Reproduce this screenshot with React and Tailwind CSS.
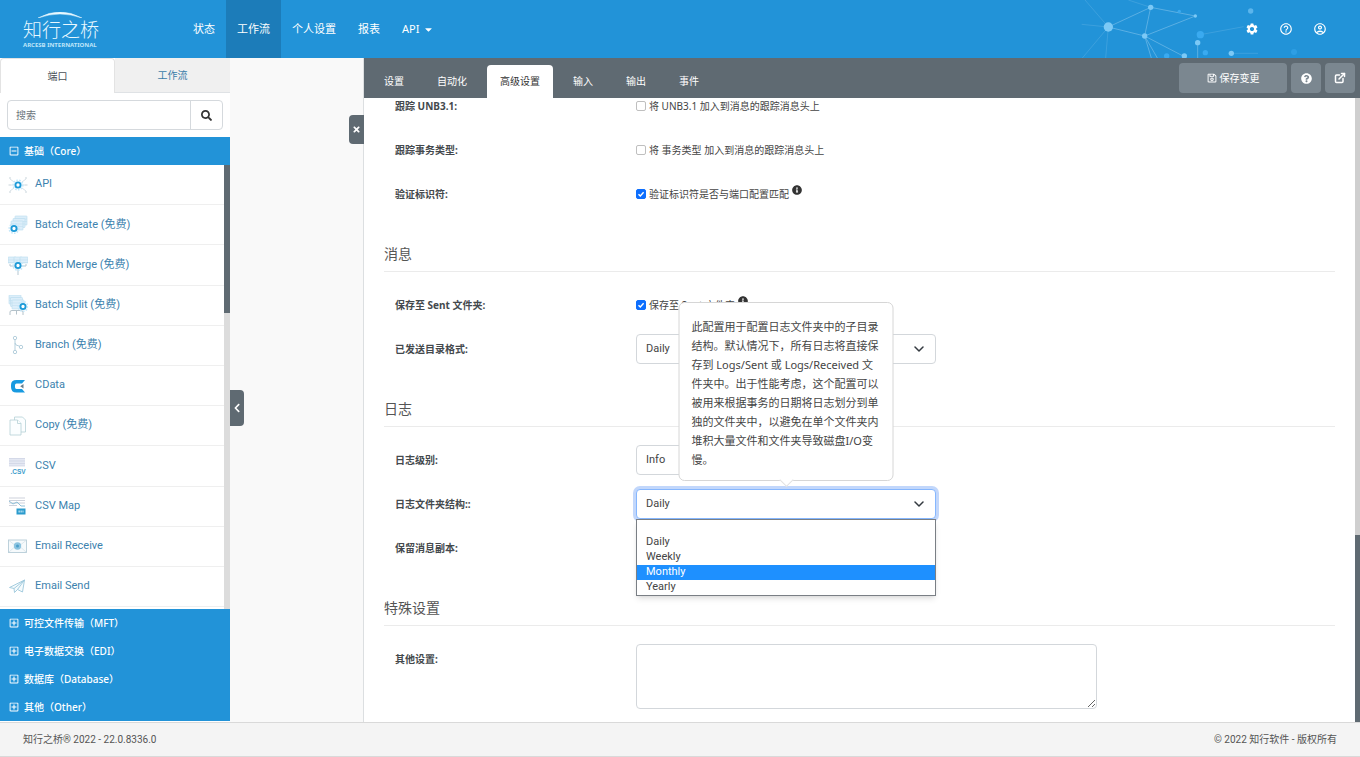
import React, { useState } from "react";
import {
  FaCaretDown,
  FaChevronLeft,
  FaInfoCircle,
  FaQuestionCircle,
  FaRegMinusSquare,
  FaRegPlusSquare,
  FaRegSave,
  FaSearch,
  FaTimes,
} from "react-icons/fa";
import { FiExternalLink } from "react-icons/fi";
import { MdHelpOutline, MdOutlineAccountCircle, MdSettings } from "react-icons/md";

const navItems = [
  { name: "状态" },
  { name: "工作流", active: true },
  { name: "个人设置" },
  { name: "报表" },
  { name: "API", dropdown: true },
];

const tabs = ["设置", "自动化", "高级设置", "输入", "输出", "事件"];

const groups = ["可控文件传输（MFT）", "电子数据交换（EDI）", "数据库（Database）", "其他（Other）"];

const Gear = ({ x, y }) => (
  <g>
    <circle cx={x} cy={y} r="4.8" fill="none" stroke="#c6e8fa" strokeWidth="1.6" strokeDasharray="1.6 1.3" />
    <circle cx={x} cy={y} r="2.6" fill="#fff" stroke="#1c9ad8" strokeWidth="1.9" />
  </g>
);

const Sheet = ({ x, y, w = 12, h = 9 }) => (
  <g>
    <rect x={x} y={y} width={w} height={h} rx="0.6" fill="#dceefa" stroke="#b9dbef" strokeWidth="0.6" />
    <path d={`M${x} ${y + 3}h${w}M${x} ${y + 5.5}h${w}`} stroke="#c3dff0" strokeWidth="0.6" />
  </g>
);

const connectors = [
  {
    name: "API",
    icon: (
      <>
        <path d="M2 4l4 3M2 10h4M2 16l4-3M18 4l-4 3M18 10h-4M18 16l-4-3" stroke="#cfdbe2" strokeWidth="0.8" />
        <path d="M1 3h2M0.5 10h2M1 17h2M17 3h2M17.500 10h2M17 17h2" stroke="#c9d5dc" strokeWidth="1.2" />
        <Gear x={10} y={10} />
      </>
    ),
  },
  {
    name: "Batch Create (免费)",
    icon: (
      <>
        <Sheet x={7} y={1} />
        <Sheet x={5} y={3.5} />
        <Sheet x={3} y={6} />
        <Gear x={6} y={13.5} />
      </>
    ),
  },
  {
    name: "Batch Merge (免费)",
    icon: (
      <>
        <Sheet x={0} y={2} w={8} h={6} />
        <Sheet x={6} y={2} w={8} h={6} />
        <Sheet x={12} y={2} w={8} h={6} />
        <path d="M2 9v2h5M18 9v2h-5M10 14v6" fill="none" stroke="#b4c7d2" strokeWidth="1" />
        <Gear x={10} y={10.5} />
      </>
    ),
  },
  {
    name: "Batch Split (免费)",
    icon: (
      <>
        <Sheet x={1} y={0} />
        <Sheet x={2.5} y={2.500} />
        <Sheet x={4} y={5} />
        <path d="M2 20v-3q0-1.500 2-1.500h9q2 0 2 1.500v3M8.500 15.500v4" fill="none" stroke="#b4c2ca" strokeWidth="1" />
        <Gear x={15} y={11.500} />
      </>
    ),
  },
  {
    name: "Branch (免费)",
    icon: (
      <g fill="none" stroke="#adc9d8" strokeWidth="0.9">
        <circle cx="7" cy="3" r="1.7" />
        <circle cx="7" cy="17" r="1.7" />
        <circle cx="13" cy="12" r="1.7" />
        <path d="M7 4.700v10.600M7 8q0 2.500 4.500 3.200" />
      </g>
    ),
  },
  {
    name: "CData",
    icon: (
      <>
        <path
          d="M17 4H8.500Q3 4 3 9v2q0 5.500 5.500 5.500H17l-3-3.500H8.500Q7 13 7 11.200V9.300Q7 7.600 8.500 7.600H14z"
          fill="#189ae0"
        />
        <path d="M15.500 8v4.500l-3.300-2.200z" fill="#6a7e8b" />
      </>
    ),
  },
  {
    name: "Copy (免费)",
    icon: (
      <g fill="#fbfeff" stroke="#b5d0d6" strokeWidth="0.8">
        <path d="M6.500 1h8l3 3v12h-11z" />
        <path d="M2 4h7.500l3.500 3.500V19H2z" />
        <path d="M9.500 4v3.500H13" />
      </g>
    ),
  },
  {
    name: "CSV",
    icon: (
      <>
        <path d="M1 2h16v8H1z" fill="#e4e8f3" />
        <path d="M1 2.500h16M1 5h16M1 7.500h16M1 10h16" stroke="#cdd2e2" strokeWidth="0.7" />
        <text x="2.500" y="18" fontSize="6.500" fontWeight="700" fontFamily="Liberation Sans, sans-serif" fill="#3c9ccb">
          .CSV
        </text>
      </>
    ),
  },
  {
    name: "CSV Map",
    icon: (
      <>
        <path d="M1 2h16M1 4.500h16M1 7h16M1 9.500h8" stroke="#cdd2dc" strokeWidth="1.1" />
        <path d="M1 5l4 3 4-2 4 4h4" fill="none" stroke="#8fc0d8" strokeWidth="1" />
        <rect x="8.500" y="12.500" width="9" height="6" fill="#2b9bcd" />
        <path d="M10.500 15.500h5" stroke="#bfe4f4" strokeWidth="1.800" strokeDasharray="1.300 0.700" />
      </>
    ),
  },
  {
    name: "Email Receive",
    icon: (
      <>
        <rect x="0.500" y="4" width="18" height="12.500" fill="#f6fafc" stroke="#b7cdd8" strokeWidth="0.9" />
        <path d="M1 4.500l5 4M18 4.500l-5 4M1 16l5-4.500M18 16l-5-4.500" stroke="#d3e0e7" strokeWidth="0.7" />
        <circle cx="9.500" cy="10" r="3.700" fill="#8cc4e0" />
        <circle cx="9.500" cy="10" r="1.500" fill="#4b9fca" />
      </>
    ),
  },
  {
    name: "Email Send",
    icon: (
      <path
        d="M1.500 11.500L16.500 4l-2 12-5-2.500-3 3-.5-4zM6 12.500L16.500 4l-7 9.500"
        fill="#f5fbfd"
        stroke="#9cc7db"
        strokeWidth="0.9"
        strokeLinejoin="round"
      />
    ),
  },
];

const Network = () => (
  <svg className="absolute right-0 top-0 h-[58px] w-[300px]" viewBox="0 0 900 174" aria-hidden="true">
    <g stroke="#6db9e8" strokeWidth="3" opacity="0.75">
      <path d="M145 81L272 22M145 81l109 27M272 22l134 26M272 22l-18 86M254 108l152-60M254 108l119 62M254 108l20 66M254 108l38 66M413 128v46" />
    </g>
    <g stroke="#56ade3" strokeWidth="3" opacity="0.5">
      <path d="M145 81L75 0M145 81l-80-8M145 81l-78 93M145 81l-8 93M272 22L205 0M421 104l130-24M514 160h80" />
    </g>
    <g fill="#7cc9f6">
      <circle cx="145" cy="81" r="14" />
      <circle cx="272" cy="22" r="8" />
      <circle cx="406" cy="48" r="5" />
      <circle cx="254" cy="108" r="8" />
      <circle cx="413" cy="128" r="8" />
      <circle cx="373" cy="168" r="8" />
      <circle cx="514" cy="160" r="8" />
    </g>
    <g fill="#3aaaf0">
      <circle cx="421" cy="104" r="11" />
      <circle cx="436" cy="158" r="8" />
      <circle cx="320" cy="168" r="8" />
      <circle cx="572" cy="33" r="8" fill="#5bb5ec" />
      <circle cx="358" cy="34" r="5" />
      <circle cx="702" cy="156" r="9" opacity="0.5" />
    </g>
  </svg>
);

const Header = () => (
  <header className="relative flex h-[58px] flex-none items-stretch bg-[#2293d8] text-white">
    <Network />
    <a href="#" className="flex w-[182px] flex-none flex-col pl-[23px] pt-3">
      <svg className="ml-3.5 h-1.5 w-[46px]" viewBox="0 0 46 6" aria-hidden="true">
        <path d="M1 6Q23-6 45 6Q23-2 1 6z" fill="#e8f8ff" stroke="#e8f8ff" strokeWidth="0.5" />
      </svg>
      <span className="font-light text-[19px] leading-6 text-[#e8f8ff]">知行之桥</span>
      <span className="font-bold text-[6px] leading-[6px] text-[#bfe5f8]">ARCESB INTERNATIONAL</span>
    </a>
    <nav className="flex text-[11px]">
      {navItems.map((item) => (
        <a
          key={item.name}
          href="#"
          className={`flex items-center gap-1 px-[11px] ${item.active ? "bg-[#1c7cb9]" : ""}`}
        >
          {item.name}
          {item.dropdown && <FaCaretDown />}
        </a>
      ))}
    </nav>
    <div className="relative ml-auto flex items-center gap-5 pr-[33px] text-[14px]">
      <button aria-label="设置"><MdSettings /></button>
      <button aria-label="帮助"><MdHelpOutline /></button>
      <button aria-label="账户"><MdOutlineAccountCircle /></button>
    </div>
  </header>
);

const Sidebar = () => (
  <aside className="relative flex w-[230px] flex-none flex-col bg-white">
    <div className="flex h-[35px] flex-none text-[10px]">
      <button className="w-[115px] rounded-t border border-b-0 border-[#e3e3e3] bg-white text-[#495057]">端口</button>
      <button className="flex-1 border-y border-b-[#dfe2e5] border-t-[#f0f0f0] bg-[#f0f0f0] text-[#3a7ca8]">工作流</button>
    </div>
    <div className="mx-[7px] my-[7px] flex h-[30px] flex-none rounded border border-[#d5d9dd]">
      <input
        type="text"
        aria-label="搜索"
        placeholder="搜索"
        className="min-w-0 flex-1 px-2 text-[10px] outline-none placeholder:text-[#6c757d]"
      />
      <button aria-label="搜索" className="flex w-8 items-center justify-center border-l border-[#d5d9dd] text-[11px] text-[#333]">
        <FaSearch />
      </button>
    </div>
    <button className="flex h-7 flex-none items-center gap-[5px] bg-[#2293d8] px-[9px] text-[10px] font-medium text-white">
      <FaRegMinusSquare />
      基础（Core）
    </button>
    <div className="flex min-h-0 flex-1">
      <ul className="flex min-w-0 flex-1 flex-col overflow-hidden pb-0.5 font-['Roboto','Noto_Sans_CJK_SC',sans-serif]">
        {connectors.map((item) => (
          <li key={item.name} className="flex flex-1 border-b border-[#efefef]">
            <a href="#" className="flex flex-1 items-center gap-[7px] pl-2 text-[11px] text-[#3c82ae]">
              <svg className="h-5 w-5" viewBox="0 0 20 20" aria-hidden="true">{item.icon}</svg>
              {item.name}
            </a>
          </li>
        ))}
      </ul>
      <div className="w-1.5 flex-none bg-[#dcdcdc]">
        <div className="h-1/3 bg-[#5f6a72]"></div>
      </div>
    </div>
    <div className="flex-none pb-px">
      {groups.map((name) => (
        <button key={name} className="flex h-7 w-full items-center gap-[5px] bg-[#2293d8] px-[9px] text-[10px] font-medium text-white">
          <FaRegPlusSquare />
          {name}
        </button>
      ))}
    </div>
    <button
      aria-label="收起"
      className="absolute left-full top-[332px] flex h-9 w-3.5 items-center justify-center rounded-r-sm bg-[#5f6a72] text-[10px] text-white"
    >
      <FaChevronLeft />
    </button>
  </aside>
);

const Section = ({ title, children }) => (
  <section>
    <h2 className="mb-[11px] flex h-14 items-end border-b border-[#ebebeb] pb-[7px] text-[14px] leading-5 text-[#555]">
      {title}
    </h2>
    {children}
  </section>
);

const Row = ({ label, id, children }) => (
  <div className="flex h-11 items-center pl-[11px]">
    <label htmlFor={id} className="w-[241px] flex-none font-bold text-[#44494d]">{label}</label>
    {children}
  </div>
);

const Check = ({ id, text, info, defaultChecked = false }) => {
  const [checked, setChecked] = useState(defaultChecked);
  return (
    <div className="flex items-center gap-[3px]">
      <span className="relative flex h-2.5 w-2.5">
        <input
          id={id}
          type="checkbox"
          checked={checked}
          onChange={() => setChecked(!checked)}
          className="h-2.5 w-2.5 appearance-none rounded-[2px] border border-[#bfbfbf] bg-white checked:border-[#0d6efd] checked:bg-[#0d6efd]"
        />
        {checked && (
          <svg className="pointer-events-none absolute inset-0" viewBox="0 0 10 10" aria-hidden="true">
            <path d="M2.500 5.200l1.800 1.800 3.300-3.700" fill="none" stroke="#fff" strokeWidth="1.400" />
          </svg>
        )}
      </span>
      <label htmlFor={id}>{text}</label>
      {info && <FaInfoCircle className="mb-2 text-[10px] text-[#333]" />}
    </div>
  );
};

const Select = ({ id, value, options, focused, wide = true }) => (
  <div className={`relative font-['Roboto',sans-serif] ${wide ? "w-[300px]" : "w-[200px]"}`}>
    <select
      id={id}
      defaultValue={value}
      className={`h-[30px] w-full appearance-none rounded border bg-white px-[9px] text-[11px] text-[#444] outline-none ${
        focused ? "border-[#86b7fe] shadow-[0_0_0_3px_#c2d7fb]" : "border-[#d3d7db]"
      }`}
    >
      {options.map((o) => (
        <option key={o}>{o}</option>
      ))}
    </select>
    <svg className="pointer-events-none absolute right-3 top-2.5 h-2.5 w-2.5" viewBox="0 0 10 10" aria-hidden="true">
      <path d="M1 3l4 4 4-4" fill="none" stroke="#343a40" strokeWidth="1.500" strokeLinecap="round" strokeLinejoin="round" />
    </svg>
  </div>
);

const periods = ["", "Daily", "Weekly", "Monthly", "Yearly"];

const FolderSelect = () => {
  const [hovered, setHovered] = useState("Monthly");
  return (
    <div className="relative z-10">
      <Select id="logFolder" value="Daily" options={periods} focused />
      <ul
        role="listbox"
        className="absolute inset-x-0 top-full border border-[#7a7f85] bg-white font-['Roboto',sans-serif] text-[11px] leading-[14px] text-[#444] shadow-md"
      >
        {periods.map((p) => (
          <li
            key={p}
            role="option"
            aria-selected={p === "Daily"}
            onMouseEnter={() => setHovered(p)}
            className={`h-[15px] px-[9px] ${p === hovered ? "bg-[#1e90ff] text-white" : ""}`}
          >
            {p}
          </li>
        ))}
      </ul>
      <div
        role="tooltip"
        className="absolute bottom-full left-1/2 mb-2 w-[215px] -translate-x-1/2 rounded-md border border-[#d6d6d6] bg-white px-3 pb-[11px] pt-3.5 text-[11px] leading-[19px] text-[#444]"
      >
        此配置用于配置日志文件夹中的子目录结构。默认情况下，所有日志将直接保存到 Logs/Sent 或 Logs/Received
        文件夹中。出于性能考虑，这个配置可以被用来根据事务的日期将日志划分到单独的文件夹中，以避免在单个文件夹内堆积大量文件和文件夹导致磁盘I/O变慢。
        <span className="absolute -bottom-[5px] left-1/2 -ml-[5px] h-2.5 w-2.5 rotate-45 border-b border-r border-[#e2e2e2] bg-white"></span>
      </div>
    </div>
  );
};

const Settings = () => (
  <div className="min-w-0 flex-1 overflow-hidden">
    <form className="-mt-3.5 px-5 text-[10px] text-[#444]">
      <Row label="跟踪 UNB3.1:" id="unb">
        <Check id="unb" text="将 UNB3.1 加入到消息的跟踪消息头上" />
      </Row>
      <Row label="跟踪事务类型:" id="type">
        <Check id="type" text="将 事务类型 加入到消息的跟踪消息头上" />
      </Row>
      <Row label="验证标识符:" id="verify">
        <Check id="verify" text="验证标识符是否与端口配置匹配" info defaultChecked />
      </Row>

      <Section title="消息">
        <Row label="保存至 Sent 文件夹:" id="sent">
          <Check id="sent" text="保存至 Sent 文件夹" info defaultChecked />
        </Row>
        <Row label="已发送目录格式:" id="sentFormat">
          <Select id="sentFormat" value="Daily" options={periods} />
        </Row>
      </Section>

      <Section title="日志">
        <Row label="日志级别:" id="level">
          <Select id="level" value="Info" options={["Info"]} wide={false} />
        </Row>
        <Row label="日志文件夹结构::" id="logFolder">
          <FolderSelect />
        </Row>
        <Row label="保留消息副本:" id="copy">
          <Check id="copy" defaultChecked />
        </Row>
      </Section>

      <Section title="特殊设置">
        <div className="flex pl-[11px]">
          <label htmlFor="other" className="flex h-11 w-[241px] flex-none items-center font-bold text-[#44494d]">
            其他设置:
          </label>
          <textarea id="other" className="mt-[7px] h-[65px] w-[461px] rounded border border-[#d3d7db] outline-none"></textarea>
        </div>
      </Section>
    </form>
  </div>
);

const Toolbar = () => {
  const [active, setActive] = useState("高级设置");
  return (
    <div className="flex h-10 flex-none items-end bg-[#5f6a72] pl-[7px] pr-[5px] text-[10px] text-white">
      <div className="flex gap-[7px]" role="tablist">
        {tabs.map((tab) => (
          <button
            key={tab}
            role="tab"
            aria-selected={tab === active}
            onClick={() => setActive(tab)}
            className={`h-[33px] rounded-t px-[13px] ${tab === active ? "bg-white text-[#333]" : ""}`}
          >
            {tab}
          </button>
        ))}
      </div>
      <div className="mb-[5px] ml-auto flex gap-1">
        <button className="flex h-[30px] w-[108px] items-center justify-center gap-[3px] rounded bg-[#7b8790]">
          <FaRegSave />
          保存变更
        </button>
        <button aria-label="帮助" className="flex h-[30px] w-[30px] items-center justify-center rounded bg-[#7b8790] text-[11px]">
          <FaQuestionCircle />
        </button>
        <button aria-label="打开" className="flex h-[30px] w-[30px] items-center justify-center rounded bg-[#7b8790] text-[12px]">
          <FiExternalLink strokeWidth={3} />
        </button>
      </div>
    </div>
  );
};

const App = () => (
  <div className="flex h-screen flex-col overflow-hidden bg-white font-['Noto_Sans','Noto_Sans_CJK_SC',sans-serif]">
    <Header />
    <div className="flex min-h-0 flex-1">
      <Sidebar />
      <div className="flex w-[134px] flex-none justify-end border-r border-[#dcdfe1] bg-[#f9f9f9]">
        <button
          aria-label="关闭"
          className="-mr-px mt-[57px] flex h-[29px] w-[15px] items-center justify-center rounded-l-sm bg-[#5f6a72] text-[9px] text-white"
        >
          <FaTimes />
        </button>
      </div>
      <main className="flex min-w-0 flex-1 flex-col">
        <Toolbar />
        <div className="flex min-h-0 flex-1">
          <Settings />
          <div className="flex w-[5px] flex-none flex-col justify-end bg-[#cfcfcf]">
            <div className="h-[30%] bg-[#5f6a72]"></div>
          </div>
        </div>
      </main>
    </div>
    <footer className="flex h-[35px] flex-none items-center justify-between border-y border-[#d9d9d9] bg-[#f4f4f4] px-[23px] font-['Roboto','Noto_Sans_CJK_SC',sans-serif] text-[10px] text-[#555]">
      <span>知行之桥® 2022 - 22.0.8336.0</span>
      <span>© 2022 知行软件 - 版权所有</span>
    </footer>
  </div>
);

export default App;
